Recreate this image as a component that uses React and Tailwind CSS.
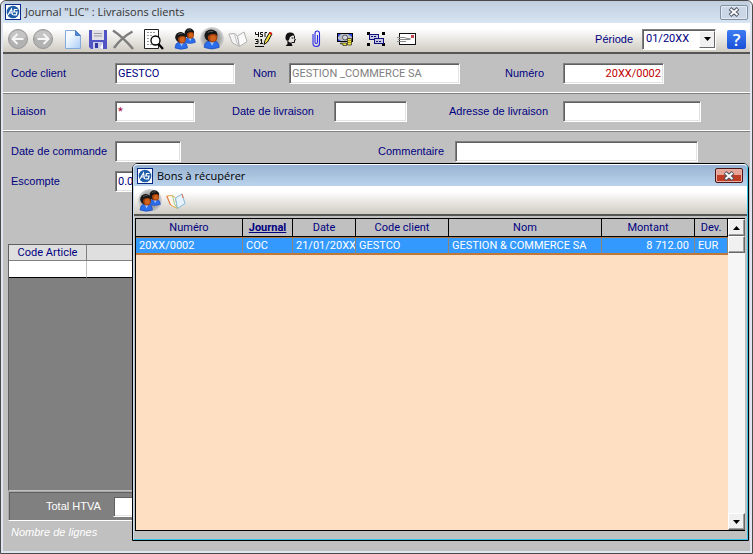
import React, { useState } from "react";
import clsx from "clsx";

const columns = [
    { key: "numero", label: "Numéro", width: 107 },
    { key: "journal", label: "Journal", width: 50, sorted: true },
    { key: "date", label: "Date", width: 63 },
    { key: "code", label: "Code client", width: 93 },
    { key: "nom", label: "Nom", width: 153 },
    { key: "montant", label: "Montant", width: 93, right: true },
    { key: "devise", label: "Dev.", width: 33 },
];

const orders = [
    {
        numero: "20XX/0002",
        journal: "COC",
        date: "21/01/20XX",
        code: "GESTCO",
        nom: "GESTION & COMMERCE SA",
        montant: "8 712.00",
        devise: "EUR",
    },
];

/* ---------- icons ---------- */

function AppLogo() {
    return (
        <svg width="16" height="16" viewBox="0 0 16 16" className="shrink-0">
            <rect x="0.5" y="0.5" width="15" height="15" fill="#fff" stroke="#0a2a86" />
            <circle cx="8" cy="8" r="6.3" fill="#1f5da8" />
            <path d="M3 11 L6.5 5 L7.5 11 M4.5 9 H7" fill="none" stroke="#fff" strokeWidth="1.2" />
            <path d="M12.5 5.5 H9.5 L8.8 8 H12 L11.3 10.8 H8.3" fill="none" stroke="#fff" strokeWidth="1.2" />
        </svg>
    );
}

function ArrowIcon({ flip }) {
    return (
        <svg width="22" height="22" viewBox="0 0 22 22">
            <circle cx="11" cy="11" r="9.5" fill="#b2b2b2" stroke="#969696" />
            <path d="M2.5 9 A8.8 8.8 0 0 1 19.5 9 Q11 12 2.5 9Z" fill="#c4c4c4" />
            <g transform={flip ? "rotate(180 11 11)" : undefined}>
                <path d="M16.5 11 H6.5 M10.5 6 L5.5 11 L10.5 16" fill="none" stroke="#f6f6f6" strokeWidth="2" />
            </g>
        </svg>
    );
}

function PageIcon() {
    return (
        <svg width="18" height="21" viewBox="0 0 18 21">
            <defs>
                <linearGradient id="page" x1="0" y1="0" x2="1" y2="1">
                    <stop offset="0.3" stopColor="#f3f9ff" />
                    <stop offset="1" stopColor="#a9ccf7" />
                </linearGradient>
            </defs>
            <path d="M1.5 1.5 H11.5 L16.5 6.5 V19.5 H1.5Z" fill="url(#page)" stroke="#86a9dc" />
            <path d="M11.5 1.5 V6.5 H16.5Z" fill="#4f86d8" stroke="#4f80c4" />
        </svg>
    );
}

function SaveIcon() {
    return (
        <svg width="20" height="21" viewBox="0 0 20 21">
            <path d="M1 1 H19 V20 H3 L1 18Z" fill="#5054c4" />
            <rect x="4" y="1" width="12" height="10" fill="#e2e2e6" />
            <path d="M6 4.5 H14 M6 7 H14" stroke="#9a9aa6" />
            <rect x="5" y="13" width="10" height="7" fill="#c9cbe6" />
            <rect x="7" y="14" width="3" height="5" fill="#3236a0" />
            <path d="M12 19 L15 14 V20Z" fill="#fff" />
        </svg>
    );
}

function DeleteIcon() {
    return (
        <svg width="22" height="21" viewBox="0 0 22 21">
            <path d="M1 1.5 Q11 8 21 20 M20.5 2.5 Q9 9 2 19" fill="none" stroke="#7d7d7d" strokeWidth="2.4" />
        </svg>
    );
}

function PreviewIcon() {
    return (
        <svg width="20" height="21" viewBox="0 0 20 21">
            <path d="M0.5 0.5 H14.5 V19.5 H0.5Z" fill="#fff" stroke="#222" />
            <path d="M3 3.5 H12 M3 6.5 H8 M3 9.5 H6 M3 12.5 H6 M3 15.5 H8" stroke="#9a9a9a" strokeDasharray="2 1" />
            <circle cx="11.5" cy="11.5" r="4.5" fill="#fff" stroke="#000" strokeWidth="1.3" />
            <path d="M14.5 15 L19 20" stroke="#000" strokeWidth="2.2" />
        </svg>
    );
}

function Person() {
    return (
        <g>
            <path d="M1 16.5 Q1 11.5 5 10.5 H9.5 Q13.5 11.5 13.5 16.5 Q7 19 1 16.5Z" fill="#2a6cea" stroke="#1a48b4" strokeWidth="0.6" />
            <path d="M5.6 11 L7.6 15 L9.6 11Z" fill="#9cc6ff" />
            <circle cx="6.6" cy="5.8" r="5.4" fill="#1a1a1a" />
            <ellipse cx="8" cy="7.6" rx="3.9" ry="4.4" fill="#a8420c" />
            <ellipse cx="8.4" cy="8.2" rx="2.4" ry="2.6" fill="#d0641c" />
            <path d="M2 6 Q3 0.5 8 1.2 Q12 2 12 5.4 Q8 3.4 4.6 5.8Z" fill="#161616" />
            <path d="M4 3 Q6 1.6 8.5 2.2" fill="none" stroke="#666" strokeWidth="0.8" />
        </g>
    );
}

function UsersIcon() {
    return (
        <svg width="22" height="22" viewBox="0 0 22 22">
            <g transform="translate(9.5 0) scale(0.88)"><Person /></g>
            <g transform="translate(0 3.5)"><Person /></g>
        </svg>
    );
}

function UserIcon() {
    return (
        <svg width="24" height="24" viewBox="0 0 24 24">
            <g transform="translate(3 2) scale(1.2 1.12)"><Person /></g>
        </svg>
    );
}

function BookIcon({ color }) {
    return (
        <svg width="20" height="17" viewBox="0 0 20 17">
            <path d="M0.8 3 L6.5 2.5 L9.5 5 L11.5 15.5 L4.5 12Z" fill={color ? "#fff8ea" : "#f4f4f4"} stroke={color ? "#e8a84a" : "#b0b0b0"} />
            <path d="M9.5 5 L16 1 L19 10.5 L11.5 15.5Z" fill={color ? "#e6f3fd" : "#fafafa"} stroke={color ? "#86b6e0" : "#b0b0b0"} />
            <path d="M6.5 2.5 L8.5 11 L11.5 15.5" fill="none" stroke={color ? "#9ccb90" : "#c2c2c2"} />
            {color && <path d="M0.8 3 L4.5 12 M16 1 L17.2 5" stroke="#e0704a" />}
        </svg>
    );
}

function NumberPenIcon() {
    return (
        <svg width="18" height="17" viewBox="0 0 18 17">
            <path d="M0.5 1 V3.5 H3 M3.5 1 V6 M8 1.5 H5.5 V3.5 H7.5 V5.5 H5 M10 6 V1.5 H12" fill="none" stroke="#111" />
            <path d="M0 8.5 H3 V10.5 H1 M3 10 V12.5 H0 M6.5 8 V13 M5 9 H6.5 M5 12.5 H8" fill="none" stroke="#111" />
            <path d="M0 15.5 H9" stroke="#111" />
            <path d="M9 13.5 L10 9.5 L14.5 1.5 L17 3 L12.5 11Z" fill="#f4e23a" stroke="#111" />
            <path d="M14 2.5 L15 0.7 L17.3 2 L16.3 4Z" fill="#e01818" />
        </svg>
    );
}

function HeadIcon() {
    return (
        <svg width="11" height="14" viewBox="0 0 11 14">
            <path d="M0.5 7 Q0 1 4.5 0.5 Q9.5 0 9.5 4 L7.5 3.5 L5 5 L4 8 L2 9Z" fill="#111" />
            <path d="M9.5 4 V6.5 L10.5 8 H9.5 V10.5 H6.5 M3 8.5 V10.5" fill="none" stroke="#111" />
            <path d="M2.5 9.5 L6.5 11 L7.5 14 H0.5 L2.5 12Z M6.5 5.5 H8.5 V6.5 H6.5Z" fill="#111" />
        </svg>
    );
}

function ClipIcon() {
    return (
        <svg width="9" height="18" viewBox="0 0 9 18">
            <path d="M1 4 V13.5 Q1 16.5 4.5 16.5 Q7.5 16.5 7.5 13.5 V3.5 Q7.5 1 5.2 1 Q3 1 3 3.5 V12 Q3 13.5 4.2 13.5 Q5.5 13.5 5.5 12 V5" fill="none" stroke="#2a2ae6" strokeWidth="1.1" />
        </svg>
    );
}

function MoneyIcon() {
    return (
        <svg width="17" height="15" viewBox="0 0 17 15">
            <rect x="0.5" y="1.5" width="15" height="8" fill="#b9bcc6" stroke="#000" />
            <path d="M1 2 H4 L1 5Z M15 2 H11 L15 5Z M1 9 H4 L1 7Z" fill="#2343e0" />
            <circle cx="8" cy="5.5" r="2.5" fill="#d4d6de" stroke="#333" strokeWidth="0.7" />
            <path d="M10.5 6.5 H14.5 V13 H10.5Z M3.5 11 H9.5 V13.5 H6 V12 H3.5Z" fill="#f4e53c" stroke="#222" strokeWidth="0.7" />
            <path d="M10.5 8.5 H14.5 M10.5 10.5 H14.5" stroke="#6b6210" strokeWidth="0.6" />
        </svg>
    );
}

function ObjectsIcon() {
    return (
        <svg width="19" height="14" viewBox="0 0 19 14">
            <path d="M0 0 H3 V3 H0Z M15 0 H18 V3 H15Z M0 11 H3 V14 H0Z M15 11 H18 V14 H15Z" fill="#000" />
            <rect x="2.5" y="2.5" width="9" height="5" fill="#c8c8e0" stroke="#10107c" />
            <rect x="7.5" y="6.5" width="9" height="5" fill="#c8c8e0" stroke="#10107c" />
            <path d="M4 4.5 H10 M9 9.5 H15" stroke="#10107c" strokeDasharray="2 1" />
        </svg>
    );
}

function MailIcon() {
    return (
        <svg width="20" height="14" viewBox="0 0 20 14">
            <rect x="2.5" y="1.5" width="16" height="11" fill="#fff" stroke="#111" />
            <rect x="14" y="3" width="3" height="3" fill="#c04a54" />
            <path d="M0 5.5 H8 M1 7.5 H13 M0 9.5 H9 M8 6 L14 7" stroke="#8a8a8a" />
        </svg>
    );
}

function CrossIcon() {
    return (
        <svg width="12" height="10" viewBox="0 0 12 10">
            <path d="M2 1.5 L10 8.5 M10 1.5 L2 8.5" stroke="#4b5362" strokeWidth="4" />
            <path d="M2.5 2 L9.5 8 M9.5 2 L2.5 8" stroke="#fff" strokeWidth="2" />
        </svg>
    );
}

/* ---------- controls ---------- */

function ToolButton({ label, children, active }) {
    return (
        <button
            type="button"
            aria-label={label}
            title={label}
            className={clsx(
                "flex h-6 w-6 shrink-0 items-center justify-center",
                active && "rounded-full bg-[radial-gradient(circle,#8a8a8a_20%,#b4b4b4_55%,#dcdcdc_72%)]"
            )}
        >
            {children}
        </button>
    );
}

function Field({ id, label, labelClass, className, ...rest }) {
    return (
        <div className="flex shrink-0 items-center">
            <label htmlFor={id} className={clsx("shrink-0 text-[11px] whitespace-nowrap", labelClass)}>
                {label}
            </label>
            <input
                id={id}
                type="text"
                className={clsx(
                    "h-[21px] border border-t-[#808080] border-r-white border-b-white border-l-[#808080] bg-white px-[2px] font-['Roboto',sans-serif] text-[11px] shadow-[inset_1px_1px_0_#606060,inset_-1px_-1px_0_#e3e3e3] outline-none",
                    className
                )}
                {...rest}
            />
        </div>
    );
}

function ScrollButton({ label, down }) {
    return (
        <button
            type="button"
            aria-label={label}
            className="flex h-[17px] w-full items-center justify-center border border-t-white border-r-[#696969] border-b-[#696969] border-l-white bg-[#f0f0f0] shadow-[inset_-1px_-1px_0_#a0a0a0]"
        >
            <svg width="7" height="4" viewBox="0 0 7 4">
                <path d={down ? "M0 0 H7 L3.5 4Z" : "M0 4 H7 L3.5 0Z"} fill="#000" />
            </svg>
        </button>
    );
}

function OrdersTable() {
    return (
        <div className="mt-[2px] mr-[2px] mb-2 ml-px flex flex-1 border-t border-b border-l border-black bg-[#ffdfc1]">
            <div className="min-w-0 flex-1">
                <table className="w-full table-fixed border-separate border-spacing-0">
                    <colgroup>
                        {columns.map((col) => (
                            <col key={col.key} style={{ width: `${(col.width / 592) * 100}%` }} />
                        ))}
                    </colgroup>
                    <thead>
                        <tr className="h-[18px] bg-[#c0c0c0] text-[11px] leading-4 text-[#000080]">
                            {columns.map((col) => (
                                <th
                                    key={col.key}
                                    scope="col"
                                    className={clsx(
                                        "border-r border-b border-black p-0 font-['Roboto',sans-serif] whitespace-nowrap",
                                        col.sorted ? "font-bold underline" : "font-normal"
                                    )}
                                >
                                    {col.label}
                                </th>
                            ))}
                        </tr>
                    </thead>
                    <tbody>
                        {orders.map((order) => (
                            <tr key={order.numero} className="bg-[#3399ff] text-[11px] leading-[15px] text-white">
                                {columns.map((col) => (
                                    <td
                                        key={col.key}
                                        className={clsx(
                                            "overflow-hidden border-t border-r border-b-2 border-t-[#a87848] border-r-[#8f8578] border-b-[#c07838] py-0 font-['Roboto',sans-serif] whitespace-nowrap",
                                            col.right ? "pr-[5px] pl-0 text-right" : "pr-0 pl-[3px]"
                                        )}
                                    >
                                        {order[col.key]}
                                    </td>
                                ))}
                            </tr>
                        ))}
                    </tbody>
                </table>
            </div>
            <div className="flex w-[17px] shrink-0 flex-col bg-[#f6f6f6]">
                <ScrollButton label="Défiler vers le haut" />
                <div className="h-[17px] border border-t-white border-r-[#696969] border-b-[#696969] border-l-white bg-[#f0f0f0] shadow-[inset_-1px_-1px_0_#a0a0a0]" />
                <div className="flex-1" />
                <ScrollButton label="Défiler vers le bas" down />
            </div>
        </div>
    );
}

function RecoverDialog() {
    return (
        <section
            role="dialog"
            aria-label="Bons à récupérer"
            className="absolute top-[162px] right-[3px] bottom-3 left-[131px] flex flex-col rounded-t-md border border-black bg-[#b9d1ea]"
        >
            <div className="flex flex-1 flex-col rounded-t border-r border-b border-l border-r-[#35c4ea] border-b-[#35c4ea] border-l-[#c5dcf5] bg-[#c0c0c0]">
                <header className="flex h-[22px] items-center rounded-t border-t border-white bg-linear-to-b from-[#98b3d2] to-[#bbd3ec] pr-1 pl-[3px]">
                    <AppLogo />
                    <h2 className="ml-1 flex-1 font-['Open_Sans',sans-serif] text-[11px] leading-4 text-black">Bons à récupérer</h2>
                    <button
                        type="button"
                        aria-label="Fermer"
                        className="flex h-[15px] w-7 items-center justify-center rounded-xs border border-[#4c1414] bg-linear-to-b from-[#e8a397] from-45% to-[#c03c25] to-50% shadow-[inset_0_0_0_1px_#e9b0a6]"
                    >
                        <CrossIcon />
                    </button>
                </header>
                <div className="flex h-[30px] items-center gap-[2px] border-b-2 border-[#555] bg-linear-to-b from-white from-20% to-[#cfcbc2] pt-[2px] pl-1">
                    <ToolButton label="Tous les clients" active>
                        <UsersIcon />
                    </ToolButton>
                    <ToolButton label="Consulter">
                        <BookIcon color />
                    </ToolButton>
                </div>
                <OrdersTable />
            </div>
        </section>
    );
}

export default function App() {
    const [periode, setPeriode] = useState("01/20XX");

    return (
        <div className="relative flex min-h-screen flex-col rounded-t-md border border-[#4a4a4a] bg-[#dfe6f2] px-[2px] pb-[2px] font-['Liberation_Sans',Arial,sans-serif] text-[11px] text-[#000080]">
            <header className="flex h-[22px] items-center rounded-t bg-linear-to-b from-[#bfcddd] to-[#d8e5f3] pr-[2px] pl-[2px]">
                <AppLogo />
                <h1 className="ml-1 flex-1 font-['Open_Sans',sans-serif] text-[11px] leading-4 text-[#333]">
                    Journal "LIC" : Livraisons clients
                </h1>
                <button
                    type="button"
                    aria-label="Fermer"
                    className="flex h-[15px] w-7 items-center justify-center rounded-xs border border-[#8390a4] bg-[#cbd7e6] shadow-[inset_0_0_0_1px_#e3ebf4]"
                >
                    <CrossIcon />
                </button>
            </header>

            <div className="flex h-[31px] shrink-0 items-center border-b-2 border-[#555] bg-linear-to-b from-white from-20% to-[#cfcbc2] pt-[3px] pr-1 pl-[3px]">
                <div className="flex gap-px">
                    <ToolButton label="Précédent"><ArrowIcon /></ToolButton>
                    <ToolButton label="Suivant"><ArrowIcon flip /></ToolButton>
                </div>
                <div className="ml-[6px] flex gap-px">
                    <ToolButton label="Nouveau"><PageIcon /></ToolButton>
                    <ToolButton label="Enregistrer"><SaveIcon /></ToolButton>
                    <ToolButton label="Supprimer"><DeleteIcon /></ToolButton>
                </div>
                <div className="ml-[7px] flex gap-[7px]">
                    <ToolButton label="Aperçu"><PreviewIcon /></ToolButton>
                    <ToolButton label="Clients"><UsersIcon /></ToolButton>
                </div>
                <div className="ml-[3px] flex gap-[2px]">
                    <ToolButton label="Client" active><UserIcon /></ToolButton>
                    <ToolButton label="Livre"><BookIcon /></ToolButton>
                    <ToolButton label="Numérotation"><NumberPenIcon /></ToolButton>
                    <ToolButton label="Représentant"><HeadIcon /></ToolButton>
                    <ToolButton label="Pièce jointe"><ClipIcon /></ToolButton>
                </div>
                <div className="ml-[5px] flex gap-[7px]">
                    <ToolButton label="Paiement"><MoneyIcon /></ToolButton>
                    <ToolButton label="Objets"><ObjectsIcon /></ToolButton>
                    <ToolButton label="Courrier"><MailIcon /></ToolButton>
                </div>

                <label htmlFor="periode" className="ml-auto">Période</label>
                <div className="relative ml-[9px]">
                    <select
                        id="periode"
                        value={periode}
                        onChange={(e) => setPeriode(e.target.value)}
                        className="block h-[21px] w-[74px] appearance-none border border-t-[#808080] border-r-white border-b-white border-l-[#808080] bg-white pl-[3px] font-['Roboto',sans-serif] text-[11px] text-[#000080] shadow-[inset_1px_1px_0_#606060] outline-none"
                    >
                        <option>01/20XX</option>
                    </select>
                    <span className="pointer-events-none absolute top-[2px] right-[1px] flex h-[17px] w-4 items-center justify-center border border-t-white border-r-[#696969] border-b-[#696969] border-l-white bg-[#f0f0f0]">
                        <svg width="7" height="4" viewBox="0 0 7 4">
                            <path d="M0 0 H7 L3.5 4Z" fill="#000" />
                        </svg>
                    </span>
                </div>
                <button
                    type="button"
                    aria-label="Aide"
                    className="ml-[11px] h-[19px] w-[19px] rounded-xs bg-linear-to-b from-[#3f7df2] to-[#1a4fd8] font-['Open_Sans',sans-serif] text-[17px] leading-[19px] font-semibold text-white"
                >
                    ?
                </button>
            </div>

            <main className="flex flex-1 flex-col bg-[#c0c0c0]">
                <div className="flex h-[39px] items-center border-b border-white pl-2 shadow-[0_1px_0_#808080]">
                    <Field id="code" label="Code client" labelClass="w-[104px]" className="w-[120px]" defaultValue="GESTCO" />
                    <Field id="nom" label="Nom" labelClass="w-9 ml-[18px]" className="w-[171px] text-[#808080]" defaultValue="GESTION _COMMERCE SA" />
                    <Field id="numero" label="Numéro" labelClass="w-[58px] ml-[45px]" className="w-[101px] text-right text-[#c00000]" defaultValue="20XX/0002" />
                </div>
                <div className="flex h-[38px] items-center border-b border-white pl-2 shadow-[0_1px_0_#808080]">
                    <Field id="liaison" label="Liaison" labelClass="w-[104px]" className="w-20 text-[#a00030]" defaultValue="*" />
                    <Field id="livraison" label="Date de livraison" labelClass="w-[102px] ml-[37px]" className="w-[73px]" />
                    <Field id="adresse" label="Adresse de livraison" labelClass="w-[114px] ml-[42px]" className="w-[138px]" />
                </div>
                <div className="flex flex-col gap-[9px] pt-[10px] pl-2">
                    <div className="flex items-center">
                        <Field id="commande" label="Date de commande" labelClass="w-[104px]" className="w-[66px]" />
                        <Field id="commentaire" label="Commentaire" labelClass="w-[77px] ml-[197px]" className="w-[243px]" />
                    </div>
                    <Field id="escompte" label="Escompte" labelClass="w-[104px]" className="w-[66px]" defaultValue="0.00" />
                </div>

                <div className="mx-[5px] mt-[52px] flex flex-1 flex-col border border-[#606060] border-b-[#c0c0c0] bg-[#808080]">
                    <table className="w-full table-fixed border-separate border-spacing-0">
                        <colgroup>
                            <col className="w-[78px]" />
                            <col />
                        </colgroup>
                        <thead>
                            <tr className="h-4 bg-[#dfdfdf] font-['Roboto',sans-serif] text-[11px] leading-[14px]">
                                <th scope="col" className="border-r border-b border-[#808080] p-0 font-normal">Code Article</th>
                                <th scope="col" className="border-b border-[#808080] p-0" />
                            </tr>
                        </thead>
                        <tbody>
                            <tr className="h-[17px] bg-white">
                                <td className="border-r border-b border-r-[#c0c0c0] border-b-black p-0" />
                                <td className="border-b border-black p-0" />
                            </tr>
                        </tbody>
                    </table>
                </div>
                <div className="mx-[5px] flex h-[30px] items-center border border-t-[#a8a8a8] border-r-white border-b-white border-l-[#a8a8a8] bg-[#808080] pl-[37px] text-white shadow-[inset_1px_1px_0_#606060]">
                    <Field id="total" label="Total HTVA" labelClass="w-[67px]" className="w-20" />
                </div>
                <p className="h-[30px] pt-[3px] pl-2 leading-4 text-white italic">Nombre de lignes</p>
            </main>

            <RecoverDialog />
        </div>
    );
}
